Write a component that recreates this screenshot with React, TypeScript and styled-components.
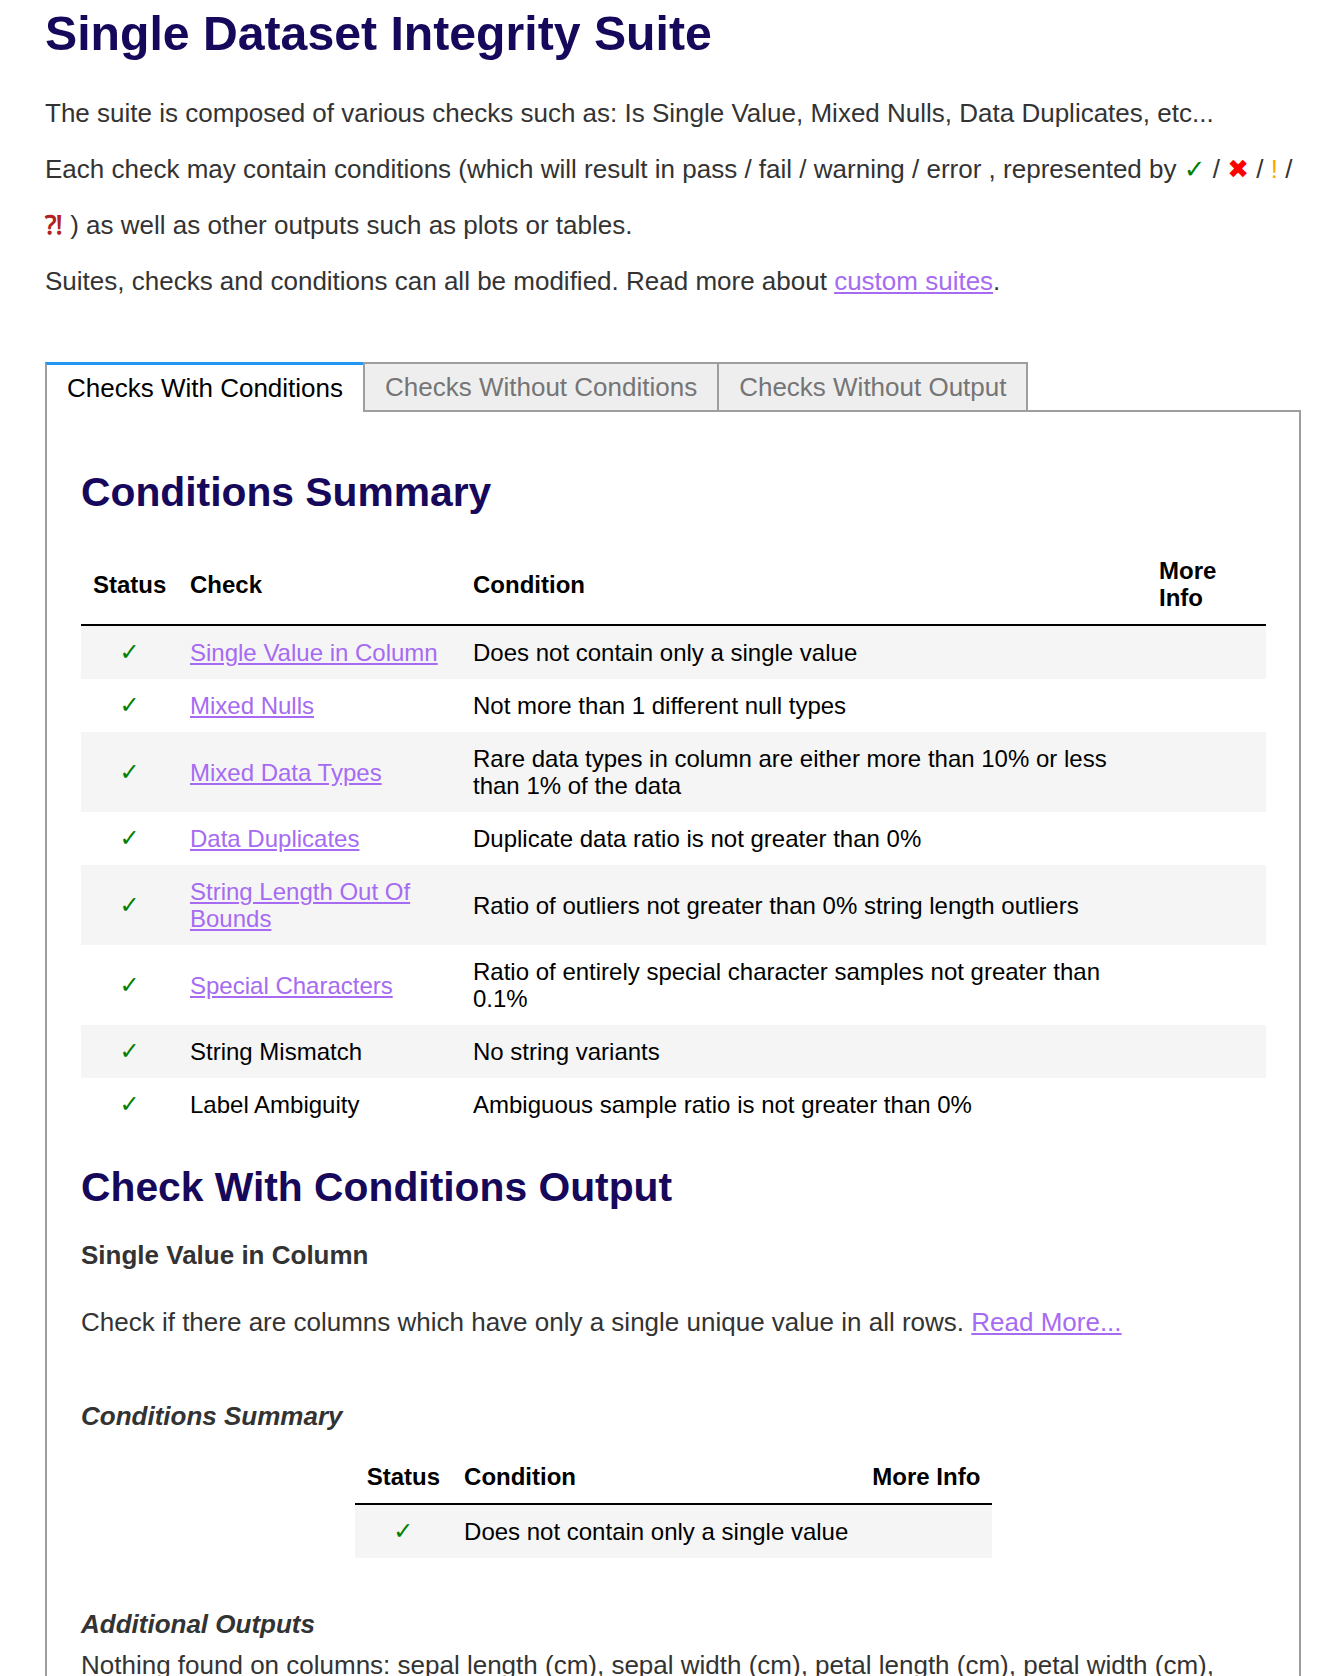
import React from "react";
import styled, { createGlobalStyle, css } from "styled-components";

const GlobalStyle = createGlobalStyle`
  html, body { margin: 0; padding: 0; background: #fff; }
  body { font-family: "Liberation Sans", Arial, sans-serif; color: #333; }
`;

const Page = styled.div`
  padding: 0 0 40px 45px;
  width: 1256px;
`;

const Title = styled.h1`
  margin: 6px 0 0;
  font-size: 48.2px;
  line-height: 55px;
  font-weight: 700;
  color: #16085a;
`;

const Intro = styled.div`
  margin-top: 24px;
`;

const IntroLine = styled.p`
  margin: 0;
  font-size: 26px;
  line-height: 56px;
  color: #333;
`;

const Sym = styled.span<{ $color: string; $dejavu?: boolean; $bold?: boolean }>`
  color: ${(p) => p.$color};
  ${(p) => p.$dejavu && css`font-family: "DejaVu Sans", sans-serif;`}
  ${(p) => p.$bold && css`font-weight: 700;`}
`;

const Link = styled.a`
  color: #a66bf2;
  text-decoration: underline;
  cursor: pointer;
`;

const TabBar = styled.div`
  display: flex;
  margin-top: 53px;
  height: 50px;
`;

const Tab = styled.div<{ $active?: boolean; $last?: boolean }>`
  box-sizing: border-box;
  display: flex;
  align-items: center;
  padding: 0 20px;
  font-size: 26px;
  border-left: 2px solid #9e9e9e;
  white-space: nowrap;
  ${(p) =>
    p.$active
      ? css`
          border-top: 3px solid #2196f3;
          background: #fff;
          color: #000;
        `
      : css`
          border-top: 2px solid #9e9e9e;
          border-bottom: 2px solid #9e9e9e;
          background: #eeeeee;
          color: #757575;
        `}
  ${(p) => p.$last && css`border-right: 2px solid #9e9e9e;`}
`;

const TabFill = styled.div`
  flex: 1;
  border-bottom: 2px solid #9e9e9e;
`;

const Panel = styled.div`
  border: 2px solid #9e9e9e;
  border-top: none;
  padding: 57px 33px 60px 34px;
`;

const SectionTitle = styled.h2<{ $mt?: number }>`
  margin: ${(p) => p.$mt ?? 0}px 0 0;
  font-size: 40.8px;
  font-weight: 700;
  line-height: normal;
  color: #16085a;
`;

const CheckTitle = styled.h4<{ $mt?: number }>`
  margin: ${(p) => p.$mt ?? 0}px 0 0;
  font-size: 26px;
  font-weight: 700;
  line-height: normal;
  color: #333;
`;

const SubTitle = styled.h5<{ $mt?: number }>`
  margin: ${(p) => p.$mt ?? 0}px 0 0;
  font-size: 26px;
  font-weight: 700;
  font-style: italic;
  line-height: normal;
  color: #333;
`;

const Text = styled.p<{ $mt?: number }>`
  margin: ${(p) => p.$mt ?? 0}px 0 0;
  font-size: 26px;
  line-height: normal;
  color: #333;
`;

const Table = styled.table<{ $full?: boolean; $mt: number }>`
  border-collapse: collapse;
  font-size: 24px;
  color: #000;
  ${(p) =>
    p.$full
      ? css`
          width: 100%;
          table-layout: fixed;
          margin-top: ${p.$mt}px;
        `
      : css`
          margin: ${p.$mt}px auto 0;
        `}

  tbody tr:nth-child(odd) {
    background: #f5f5f5;
  }
`;

const Th = styled.th<{ $w?: number }>`
  ${(p) => p.$w && css`width: ${p.$w}px;`}
  box-sizing: border-box;
  padding: 12px 12px 13px;
  text-align: left;
  vertical-align: middle;
  font-weight: 700;
  line-height: 27px;
  border-bottom: 2px solid #000;
`;

const Td = styled.td`
  padding: 13px 12px;
  vertical-align: middle;
  line-height: 27px;
`;

const StatusTd = styled(Td)`
  text-align: center;
  color: green;
  font-family: "DejaVu Sans", sans-serif;
`;

type Row = { check: string; link: boolean; condition: string };

const rows: Row[] = [
  { check: "Single Value in Column", link: true, condition: "Does not contain only a single value" },
  { check: "Mixed Nulls", link: true, condition: "Not more than 1 different null types" },
  {
    check: "Mixed Data Types",
    link: true,
    condition: "Rare data types in column are either more than 10% or less than 1% of the data",
  },
  { check: "Data Duplicates", link: true, condition: "Duplicate data ratio is not greater than 0%" },
  {
    check: "String Length Out Of Bounds",
    link: true,
    condition: "Ratio of outliers not greater than 0% string length outliers",
  },
  {
    check: "Special Characters",
    link: true,
    condition: "Ratio of entirely special character samples not greater than 0.1%",
  },
  { check: "String Mismatch", link: false, condition: "No string variants" },
  { check: "Label Ambiguity", link: false, condition: "Ambiguous sample ratio is not greater than 0%" },
];

export default function App() {
  return (
    <>
      <GlobalStyle />
      <Page>
        <Title>Single Dataset Integrity Suite</Title>
        <Intro>
          <IntroLine>
            The suite is composed of various checks such as: Is Single Value, Mixed Nulls, Data
            Duplicates, etc...
          </IntroLine>
          <IntroLine>
            Each check may contain conditions (which will result in pass / fail / warning / error ,
            represented by <Sym $color="green" $dejavu>✓</Sym> /{" "}
            <Sym $color="red" $dejavu>✖</Sym> / <Sym $color="orange">!</Sym> /{" "}
            <Sym $color="firebrick" $bold>⁈</Sym> ) as well as other outputs such as plots or
            tables.
          </IntroLine>
          <IntroLine>
            Suites, checks and conditions can all be modified. Read more about{" "}
            <Link>custom suites</Link>.
          </IntroLine>
        </Intro>

        <TabBar>
          <Tab $active>Checks With Conditions</Tab>
          <Tab>Checks Without Conditions</Tab>
          <Tab $last>Checks Without Output</Tab>
          <TabFill />
        </TabBar>

        <Panel>
          <SectionTitle>Conditions Summary</SectionTitle>
          <Table $full $mt={29}>
            <thead>
              <tr>
                <Th $w={97}>Status</Th>
                <Th $w={283}>Check</Th>
                <Th $w={686}>Condition</Th>
                <Th $w={119}>More Info</Th>
              </tr>
            </thead>
            <tbody>
              {rows.map((r) => (
                <tr key={r.check}>
                  <StatusTd>✓</StatusTd>
                  <Td>{r.link ? <Link>{r.check}</Link> : r.check}</Td>
                  <Td>{r.condition}</Td>
                  <Td />
                </tr>
              ))}
            </tbody>
          </Table>

          <SectionTitle $mt={33}>Check With Conditions Output</SectionTitle>
          <CheckTitle $mt={29}>Single Value in Column</CheckTitle>
          <Text $mt={36}>
            Check if there are columns which have only a single unique value in all rows.{" "}
            <Link>Read More...</Link>
          </Text>
          <SubTitle $mt={63}>Conditions Summary</SubTitle>
          <Table $mt={19}>
            <thead>
              <tr>
                <Th>Status</Th>
                <Th>Condition</Th>
                <Th>More Info</Th>
              </tr>
            </thead>
            <tbody>
              <tr>
                <StatusTd>✓</StatusTd>
                <Td>Does not contain only a single value</Td>
                <Td />
              </tr>
            </tbody>
          </Table>
          <SubTitle $mt={51}>Additional Outputs</SubTitle>
          <Text $mt={10}>
            Nothing found on columns: sepal length (cm), sepal width (cm), petal length (cm), petal
            width (cm), target
          </Text>
        </Panel>
      </Page>
    </>
  );
}
